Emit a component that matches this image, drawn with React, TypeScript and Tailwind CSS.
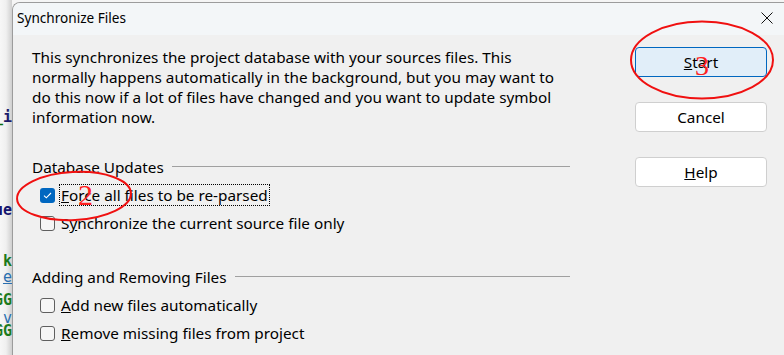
import React from "react";

const FONT = { fontFamily: '"Noto Sans", "Open Sans", Arial, sans-serif' } as React.CSSProperties;

function Check({ checked }: { checked?: boolean }) {
  if (checked) {
    return (
      <div className="w-[15px] h-[15px] rounded-[3px] bg-[#0067c0] flex items-center justify-center shrink-0">
        <svg width="9" height="7" viewBox="0 0 9 7" fill="none">
          <path d="M1 3.6 L3.3 5.8 L8 1" stroke="white" strokeWidth="1.1" />
        </svg>
      </div>
    );
  }
  return <div className="w-[15px] h-[15px] rounded-[3px] border border-[#5f5f5f] bg-[#f6f6f6] shrink-0" />;
}

function Row({ checked, label, focus }: { checked?: boolean; label: React.ReactNode; focus?: boolean }) {
  return (
    <div className="h-[28px] flex items-center pl-[8px]">
      <Check checked={checked} />
      <div className={"ml-[5px] px-[1px] leading-[20px] " + (focus ? "outline-1 outline-dotted outline-black" : "")}>{label}</div>
    </div>
  );
}

function Group({ title }: { title: string }) {
  return (
    <div className="h-[20px] flex items-center">
      <span className="leading-[20px]">{title}</span>
      <div className="flex-1 h-px bg-[#a0a0a0] ml-[8px] mt-[-1px]" />
    </div>
  );
}

function Btn({ children, primary }: { children: React.ReactNode; primary?: boolean }) {
  return (
    <div
      className={
        "w-[132px] h-[30px] rounded-[4px] flex items-center justify-center leading-[20px] " +
        (primary ? "border border-[#0067c0] bg-[#e1eef9]" : "border border-[#cfcfcf] bg-white")
      }
    >
      {children}
    </div>
  );
}

export default function App() {
  return (
    <div className="w-[784px] h-[355px] overflow-hidden flex bg-[#f5f5f5] text-black" style={FONT}>
      <div className="relative w-[12px] h-full bg-gradient-to-r from-[#f7f7f7] via-[#f0f0f0] to-[#cfcfcf] overflow-hidden font-bold text-[15px]" style={{ fontFamily: '"DejaVu Sans Mono", monospace' }}>
        <span className="absolute right-0 top-[106px] text-[#0b6b0b]">_<span className="text-[#1b1b6b]">i</span></span>
        <span className="absolute right-0 top-[199px] text-[#14146e]">ue</span>
        <span className="absolute right-0 top-[250px] text-[#1c7a1c]">k</span>
        <span className="absolute right-0 top-[266px] text-[#2a6fb0] font-normal underline">e</span>
        <span className="absolute right-0 top-[289px] text-[#1c7a1c]">GG</span>
        <span className="absolute right-0 top-[307px] text-[#2a6fb0] font-normal">_v</span>
        <span className="absolute right-0 top-[320px] text-[#1c7a1c]">GG</span>
        <span className="absolute right-[4px] top-[342px] text-[#6a2a8a]">.</span>
      </div>
      <div className="relative flex-1 mt-[2px] border-l border-t border-[#9c9c9c] rounded-tl-[8px] bg-[#f0f0f0] flex flex-col overflow-hidden">
        <div className="h-[32px] bg-[#f3f6f8] flex items-center justify-between pl-[4px] pr-[11px] shrink-0">
          <span className="text-[13.6px] mt-[-2px]">Synchronize Files</span>
          <svg width="12" height="12" viewBox="0 0 12 12" className="mt-[-2px]">
            <path d="M0.5 0.5 L11.5 11.5 M11.5 0.5 L0.5 11.5" stroke="#111" strokeWidth="1" />
          </svg>
        </div>
        <div className="flex flex-1 text-[15.3px]">
          <div className="w-[557px] pl-[19px] pt-[12px] flex flex-col">
            <p className="leading-[20px] whitespace-nowrap">
              This synchronizes the project database with your sources files. This
              <br />
              normally happens automatically in the background, but you may want to
              <br />
              do this now if a lot of files have changed and you want to update symbol
              <br />
              information now.
            </p>
            <div className="mt-[30px]">
              <Group title="Database Updates" />
              <div className="mt-[4px]">
                <Row checked focus label={<><span className="underline">F</span>orce all files to be re-parsed</>} />
                <Row label={<>S<span className="underline">y</span>nchronize the current source file only</>} />
              </div>
            </div>
            <div className="mt-[30px]">
              <Group title="Adding and Removing Files" />
              <div className="mt-[4px]">
                <Row label={<><span className="underline">A</span>dd new files automatically</>} />
                <Row label={<><span className="underline">R</span>emove missing files from project</>} />
              </div>
            </div>
          </div>
          <div className="flex flex-col gap-[25px] pt-[12px] ml-[65px]">
            <Btn primary><span className="underline">S</span>tart</Btn>
            <Btn>Cancel</Btn>
            <Btn><span className="underline">H</span>elp</Btn>
          </div>
        </div>
      </div>
      <svg className="absolute left-0 top-0 pointer-events-none" width="784" height="355">
        <ellipse cx="702" cy="60" rx="71" ry="38.5" fill="none" stroke="#f01010" strokeWidth="2" />
        <ellipse cx="74" cy="196" rx="57" ry="24" fill="none" stroke="#f01010" strokeWidth="2" transform="rotate(-3 74 196)" />
      </svg>
      <span className="absolute left-[78px] top-[178px] text-[30px] leading-[34px] text-[#ff2020]" style={{ fontFamily: '"Liberation Serif", serif' }}>2</span>
      <span className="absolute left-[695px] top-[51px] text-[28px] leading-[30px] text-[#ff2020]" style={{ fontFamily: '"Liberation Serif", serif' }}>3</span>
    </div>
  );
}
